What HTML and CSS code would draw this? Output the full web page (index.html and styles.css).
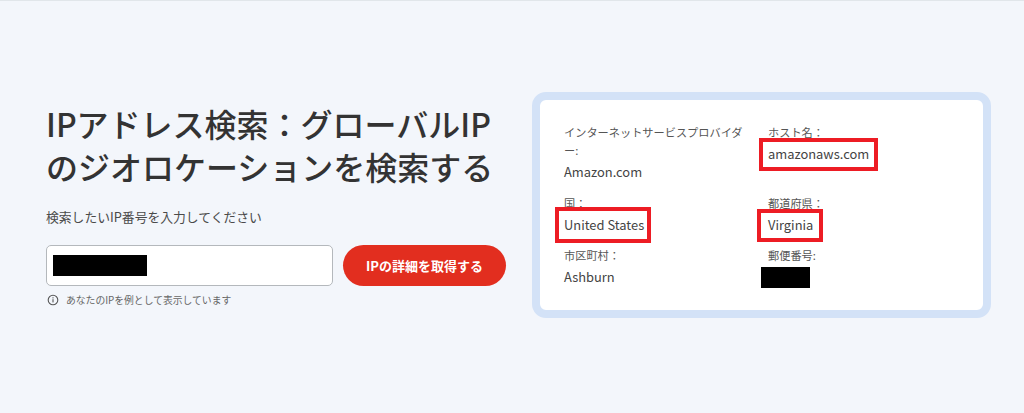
FILE: index.html
```html
<!DOCTYPE html>
<html lang="ja">
<head>
<meta charset="utf-8">
<title>IPアドレス検索</title>
<link rel="stylesheet" href="styles.css">
</head>
<body>
<main class="page">
  <section class="search">
    <h1 class="title">IPアドレス検索：グローバルIPのジオロケーションを検索する</h1>
    <p class="prompt">検索したいIP番号を入力してください</p>
    <div class="form">
      <div class="input"><span class="redact redact-ip"></span></div>
      <button class="submit" type="button">IPの詳細を取得する</button>
    </div>
    <p class="hint">
      <svg class="hint-icon" viewBox="0 0 12 12" width="12" height="12" aria-hidden="true">
        <circle cx="6" cy="6" r="4.8" fill="none" stroke="#555" stroke-width="1.1"/>
        <rect x="5.45" y="5.2" width="1.1" height="3.2" fill="#555"/>
        <rect x="5.45" y="3.3" width="1.1" height="1.1" fill="#555"/>
      </svg>
      <span>あなたのIPを例として表示しています</span>
    </p>
  </section>
  <section class="card">
    <div class="grid">
      <div class="cell cell-a">
        <div class="label">インターネットサービスプロバイダー:</div>
        <div class="value">Amazon.com</div>
      </div>
      <div class="cell cell-a">
        <div class="label">ホスト名：</div>
        <div class="value"><span class="mark mark-host">amazonaws.com</span></div>
      </div>
      <div class="cell cell-b">
        <div class="label">国：</div>
        <div class="value"><span class="mark mark-country">United States</span></div>
      </div>
      <div class="cell cell-b">
        <div class="label">都道府県：</div>
        <div class="value"><span class="mark mark-region">Virginia</span></div>
      </div>
      <div class="cell">
        <div class="label">市区町村：</div>
        <div class="value">Ashburn</div>
      </div>
      <div class="cell">
        <div class="label">郵便番号:</div>
        <div class="value"><span class="redact redact-zip"></span></div>
      </div>
    </div>
  </section>
</main>
</body>
</html>
```
FILE: styles.css
```css
* { box-sizing: border-box; }
html, body { margin: 0; height: 100%; }
body {
  background: #f3f6fb;
  color: #3f3f3f;
  font-family: "Noto Sans CJK JP", "Noto Sans", sans-serif;
  overflow: hidden;
}
.page {
  display: flex;
  gap: 26px;
  height: 100%;
  padding: 91px 0 0 46px;
  border-top: 1px solid #e1e6ea;
}
.search { width: 460px; padding-top: 10px; }
.title {
  margin: 0;
  width: 450px;
  font-size: 32px;
  line-height: 43px;
  font-weight: 500;
  color: #333;
}
.prompt {
  margin: 19px 0 0;
  font-size: 12.8px;
  line-height: 20px;
  color: #4a4a4a;
}
.form { display: flex; gap: 10px; margin-top: 18px; }
.input {
  flex: none;
  display: flex;
  align-items: center;
  width: 287px;
  height: 41px;
  padding: 0 6px;
  background: #fff;
  border: 1px solid #b4b8bc;
  border-radius: 5px;
}
.redact { display: block; background: #000; }
.redact-ip { width: 94px; height: 21px; }
.redact-zip { width: 49px; height: 21px; margin-left: -7px; }
.submit {
  flex: none;
  width: 163px;
  height: 41px;
  border: 0;
  border-radius: 21px;
  background: #e22e1f;
  color: #fff;
  font: 700 13px/1 "Noto Sans CJK JP", "Noto Sans", sans-serif;
}
.hint {
  display: flex;
  align-items: center;
  gap: 7px;
  margin: 6px 0 0 0;
  padding-left: 1px;
  font-size: 9.8px;
  line-height: 16px;
  color: #666;
}
.hint-icon { flex: none; }
.card {
  width: 459px;
  height: 226px;
  padding: 23px 24px;
  background: #fff;
  border: 8px solid #d3e2f7;
  border-radius: 14px;
}
.grid {
  display: grid;
  grid-template-columns: 204px 204px;
}
.cell { padding-right: 14px; }
.cell-a { padding-bottom: 12px; }
.cell-b { padding-bottom: 11px; }
.label {
  font-size: 11.2px;
  line-height: 18px;
  color: #555;
}
.value {
  margin-top: 3px;
  font-size: 12.9px;
  line-height: 20px;
  color: #444;
}
.mark { position: relative; display: inline-block; }
.mark::after {
  content: "";
  position: absolute;
  border: 4px solid #ed1c24;
}
.mark-host::after { inset: -6px -9px -7px -9px; }
.mark-country::after { inset: -8px -7px -8px -9px; }
.mark-region::after { inset: -6px -10px -7px -11px; }
```
